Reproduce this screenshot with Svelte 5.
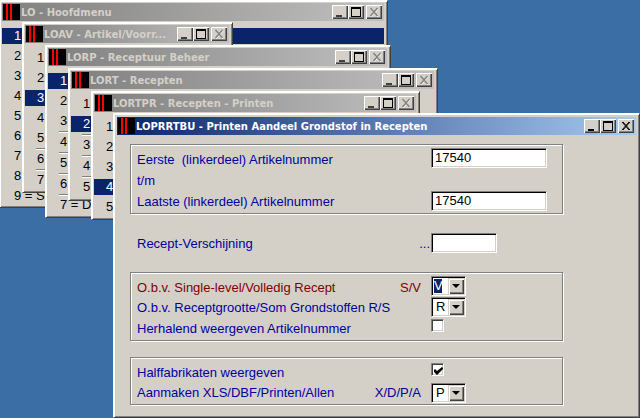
<script>
  const windows = [
    { title: 'LO - Hoofdmenu', x: -1, y: 0, w: 389, h: 208, sel: 1, rows: ['1', '2', '3', '4', '5', '6', '7', '8', '9 = Systeem'], ruled: 0 },
    { title: 'LOAV - Artikel/Voorr...', x: 22, y: 22, w: 211, h: 171, sel: 3, rows: ['1', '2', '3', '4', '5', '6', '7'], ruled: 6 },
    { title: 'LORP - Receptuur Beheer', x: 45, y: 45, w: 346, h: 173, sel: 1, rows: ['1', '2', '3', '4', '5', '6', '7 = Diversen'], ruled: 4 },
    { title: 'LORT - Recepten', x: 68, y: 68, w: 370, h: 133, sel: 2, rows: ['1', '2', '3', '4', '5'], ruled: 3 },
    { title: 'LORTPR - Recepten - Printen', x: 91, y: 91, w: 329, h: 129, sel: 4, rows: ['1', '2', '3', '4', '5'], ruled: 0 }
  ];
</script>

{#snippet titlebar(title, active)}
  <div class="titlebar" class:active>
    <span class="logo"><i></i><i></i></span>
    <span class="title">{title}</span>
    <span class="buttons">
      <span class="cap"><svg width="16" height="14"><rect x="4" y="10" width="6" height="2" fill={active ? '#000' : '#404040'} /></svg></span>
      <span class="cap"><svg width="16" height="14"><path d="M3 2h10v10H3z M4 4v7h8V4z" fill="#000" fill-rule="evenodd" /></svg></span>
      <span class="cap gap">
        {#if active}
          <svg width="16" height="14"><path d="M4 3l7 8M5 3l7 8M11 3l-7 8M12 3l-7 8" stroke="#000" fill="none" /></svg>
        {:else}
          <svg width="16" height="14"><path d="M5 4l7 8M12 4l-7 8" stroke="#fff" fill="none" /><path d="M4.500 3l7 8M11.500 3l-7 8" stroke="#808080" stroke-width="1.4" fill="none" /></svg>
        {/if}
      </span>
    </span>
  </div>
{/snippet}

{#snippet combo(value, picked)}
  <div class="combo">
    <span class="val" class:picked>{value}</span>
    <b><u></u></b>
  </div>
{/snippet}

<div class="desktop">
  {#each windows as win}
    <div class="window" style="left:{win.x}px;top:{win.y}px;width:{win.w}px;height:{win.h}px">
      {@render titlebar(win.title, false)}
      <div class="menu">
        {#each win.rows as row, i}
          <div class="row" class:sel={win.sel === i + 1} class:ruled={win.ruled && i + 1 >= win.ruled}>
            <span>{row}</span>
          </div>
        {/each}
      </div>
    </div>
  {/each}

  <div class="window main">
    {@render titlebar('LOPRRTBU - Printen Aandeel Grondstof in Recepten', true)}
    <div class="form">
      <div class="group g1">
        <div class="line">
          <span class="label">Eerste&nbsp; (linkerdeel) Artikelnummer</span>
          <div class="input up"><span>17540</span></div>
        </div>
        <div class="line"><span class="label">t/m</span></div>
        <div class="line">
          <span class="label">Laatste (linkerdeel) Artikelnummer</span>
          <div class="input"><span>17540</span></div>
        </div>
      </div>

      <div class="line solo">
        <span class="label">Recept-Verschijning</span>
        <em class="dots">...</em>
        <div class="input short"></div>
      </div>

      <div class="group g2">
        <div class="line">
          <span class="label red">O.b.v. Single-level/Volledig Recept</span>
          <em class="red">S/V</em>
          {@render combo('V', true)}
        </div>
        <div class="line">
          <span class="label">O.b.v. Receptgrootte/Som Grondstoffen R/S</span>
          {@render combo('R', false)}
        </div>
        <div class="line">
          <span class="label">Herhalend weergeven Artikelnummer</span>
          <div class="check"></div>
        </div>
      </div>

      <div class="group g3">
        <div class="line">
          <span class="label">Halffabrikaten weergeven</span>
          <div class="check">
            <svg width="9" height="9"><path d="M0 3l1-1 2 2 5-4 1 1v1L3 8 0 5z" fill="#000" /></svg>
          </div>
        </div>
        <div class="line">
          <span class="label">Aanmaken XLS/DBF/Printen/Allen</span>
          <em>X/D/P/A</em>
          {@render combo('P', false)}
        </div>
      </div>
    </div>
  </div>
</div>

<style>
  :global(body) {
    margin: 0;
    background: #3a6ea5;
  }

  .desktop {
    position: relative;
    width: 640px;
    height: 418px;
    overflow: hidden;
    background: #3a6ea5;
    font-family: 'Liberation Sans', Arial, sans-serif;
    font-size: 13px;
  }

  .window {
    position: absolute;
    box-sizing: border-box;
    padding: 2px 3px 3px 2px;
    background: #d4d0c8;
    border-top: 1px solid #fff;
    border-left: 1px solid #fff;
    border-right: 1px solid #404040;
    border-bottom: 1px solid #404040;
    box-shadow: inset 1px 1px 0 #fff, inset -1px -1px 0 #808080;
    display: flex;
    flex-direction: column;
    overflow: hidden;
  }

  .main {
    left: 113px;
    top: 113px;
    width: 527px;
    height: 305px;
    padding: 3px;
  }

  .titlebar {
    flex: none;
    height: 18px;
    display: flex;
    align-items: center;
    background: linear-gradient(to right, #808080, #c0c0c0);
    color: #d4d0c8;
    font-family: 'DejaVu Sans', Verdana, sans-serif;
    font-weight: bold;
    font-size: 10px;
  }

  .titlebar.active {
    background: linear-gradient(to right, #0a246a, #a6caf0);
    color: #fff;
  }

  .logo {
    flex: none;
    box-sizing: border-box;
    width: 17px;
    height: 16px;
    margin: 0 1px 0 1px;
    padding-left: 3px;
    background: #000;
    display: flex;
    gap: 2px;
  }

  .logo i {
    width: 2px;
    background: #f00;
  }

  .title {
    flex: 1;
    white-space: nowrap;
    overflow: hidden;
  }

  .buttons {
    flex: none;
    display: flex;
    margin-right: 2px;
  }

  .cap {
    box-sizing: border-box;
    width: 16px;
    height: 14px;
    background: #d4d0c8;
    box-shadow: inset 1px 1px 0 #fff, inset -1px -1px 0 #404040, inset -2px -2px 0 #808080;
    display: block;
  }

  .cap svg {
    display: block;
  }

  .cap.gap {
    margin-left: 2px;
  }

  .menu {
    flex: 1;
    padding-top: 7px;
    color: #000;
  }

  .row {
    box-sizing: border-box;
    height: 16px;
    margin-bottom: 4px;
    line-height: 16px;
    position: relative;
  }

  .row span {
    margin-left: 12px;
    white-space: nowrap;
  }

  .row.sel {
    background: #0a246a;
    color: #fff;
  }

  .row.ruled {
    margin-top: 5px;
  }

  .row.ruled::before {
    content: '';
    position: absolute;
    left: 11px;
    top: -3px;
    width: 9px;
    height: 1px;
    background: #808080;
    box-shadow: 0 1px 0 #fff;
  }

  .form {
    flex: 1;
    padding: 9px 0 0 13px;
    display: flex;
    flex-direction: column;
    color: #0000a0;
  }

  .group {
    box-sizing: border-box;
    padding: 4px 0 0 6px;
    width: 433px;
    border: 1px solid #808080;
    box-shadow: 1px 1px 0 #fff, inset 1px 1px 0 #fff;
  }

  .g1 { height: 70px; }
  .g2 { height: 69px; margin-top: 19px; }
  .g3 { height: 48px; margin-top: 16px; }

  .line {
    height: 21px;
    width: 424px;
    display: grid;
    grid-template-columns: 1fr auto 130px;
    align-items: center;
  }

  .g2 .line,
  .g3 .line {
    height: 20.5px;
  }

  .solo {
    height: 20px;
    margin-top: 19px;
    margin-left: 7px;
  }

  .label {
    grid-column: 1;
    white-space: nowrap;
  }

  .red {
    color: #800000;
  }

  em {
    grid-column: 2;
    font-style: normal;
    margin-right: 10px;
  }

  em.dots {
    margin-right: 1px;
  }

  .input,
  .combo,
  .check {
    grid-column: 3;
    box-sizing: border-box;
    align-self: start;
    background: #fff;
    color: #000;
    border: 1px solid;
    border-color: #808080 #fff #fff #808080;
  }

  .input {
    width: 116px;
    height: 20px;
    box-shadow: inset 1px 1px 0 #000, inset -1px -1px 0 #d4d0c8;
    padding-left: 3px;
    line-height: 18px;
  }

  .input.up {
    margin-top: -1px;
  }

  .input.short {
    width: 66px;
  }

  .combo {
    width: 35px;
    height: 20px;
    margin-top: -1px;
    padding: 1px;
    box-shadow: inset 1px 1px 0 #000, inset -1px -1px 0 #d4d0c8;
    display: flex;
  }

  .g3 .combo {
    margin-top: 0;
  }

  .val {
    flex: 1;
    padding-left: 3px;
    line-height: 16px;
  }

  .val.picked {
    background: #0a246a;
    color: #fff;
    flex: none;
    width: 8px;
    height: 14px;
    margin: 1px 0 1px 1px;
    padding-left: 0;
    line-height: 14px;
    text-align: center;
  }

  .combo b {
    margin-left: auto;
    flex: none;
    width: 16px;
    background: #d4d0c8;
    box-shadow: inset 1px 1px 0 #d4d0c8, inset 2px 2px 0 #fff, inset -1px -1px 0 #404040, inset -2px -2px 0 #808080;
    display: flex;
    align-items: center;
    justify-content: center;
  }

  .combo u {
    width: 0;
    height: 0;
    border-left: 4px solid transparent;
    border-right: 4px solid transparent;
    border-top: 4px solid #000;
  }

  .check {
    width: 13px;
    height: 13px;
    margin-top: 1px;
    padding: 1px;
    box-shadow: inset 1px 1px 0 #404040, inset -1px -1px 0 #d4d0c8;
  }

  .check svg {
    display: block;
    margin: 2px 0 0 1px;
  }
</style>
